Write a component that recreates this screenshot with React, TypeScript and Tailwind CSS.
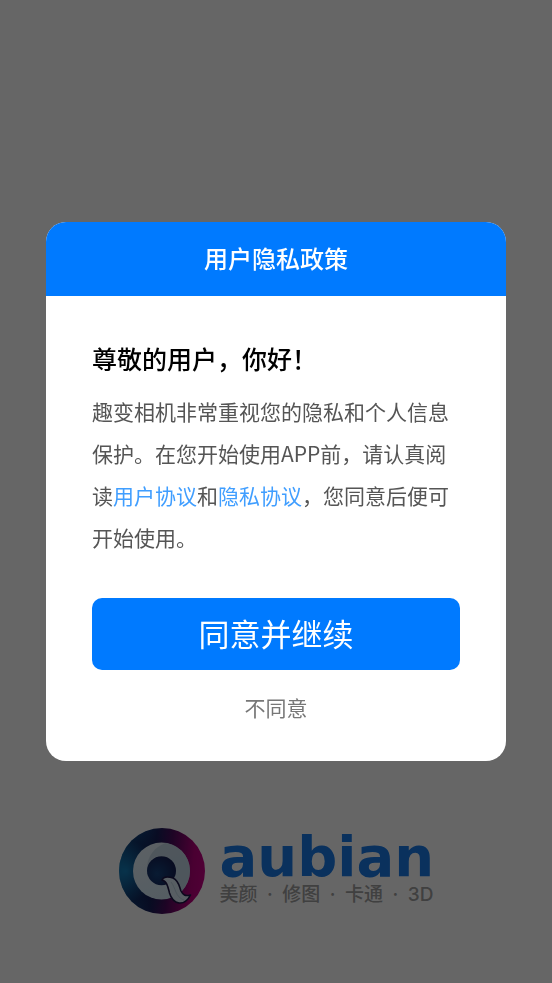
import React from "react";

function LogoMark() {
  return (
    <svg viewBox="0 0 86 86" className="size-[86px] shrink-0" aria-hidden="true">
      <defs>
        <linearGradient id="disc" x1="0" y1="0.45" x2="1" y2="0.55">
          <stop offset="0" stopColor="#1278b4" />
          <stop offset="0.2" stopColor="#114a85" />
          <stop offset="0.4" stopColor="#16205a" />
          <stop offset="0.58" stopColor="#4a0c5c" />
          <stop offset="0.85" stopColor="#b8007c" />
          <stop offset="1" stopColor="#c80086" />
        </linearGradient>
        <radialGradient id="glow" cx="0.08" cy="0.5" r="0.6">
          <stop offset="0" stopColor="#1490cc" stopOpacity="0.6" />
          <stop offset="0.6" stopColor="#101848" stopOpacity="0.5" />
          <stop offset="1" stopColor="#101848" stopOpacity="0" />
        </radialGradient>
        <linearGradient id="ring" x1="0.2" y1="0" x2="0.6" y2="1">
          <stop offset="0" stopColor="#e6f2fa" />
          <stop offset="1" stopColor="#d3e8f6" />
        </linearGradient>
        <radialGradient id="hole" cx="0.35" cy="0.6" r="0.7">
          <stop offset="0" stopColor="#17457f" />
          <stop offset="1" stopColor="#141c50" />
        </radialGradient>
      </defs>
      <circle cx="43" cy="43" r="43" fill="url(#disc)" />
      <circle cx="43" cy="43" r="43" fill="url(#glow)" />
      <circle cx="42.5" cy="43" r="28.5" fill="url(#ring)" />
      <path
        d="M47 15C60 17 70 28 71 41C71 50 68 57 63 63L55 50C58 40 54 30 43 28C36 28 30 31 28 40C28 29 36 18 47 15Z"
        fill="#b9cfde"
        opacity="0.7"
      />
      <circle cx="42.5" cy="42.7" r="14.5" fill="url(#hole)" />
      <path
        d="M43 52C44 49 48 48 54 50C60 53 60 58 62 63C64 67 66 68.500 71.500 67C69 72 65 75.500 60 75C54 74 52 70 50.500 65C49 59 48 53 43 52Z"
        fill="#dcecf7"
        stroke="#1c1748"
        strokeWidth="1.6"
        strokeLinejoin="round"
      />
      <path d="M52 54C57 60 56 69 65 72" fill="none" stroke="#b4cadb" strokeWidth="0.8" />
    </svg>
  );
}

function Brand() {
  return (
    <div className="flex items-center gap-[15px]">
      <LogoMark />
      <div className="w-[214px]">
        <p className="font-['DejaVu_Sans',sans-serif] text-[56px] leading-[48px] font-bold text-[#1a7ae8]">aubian</p>
        <p className="flex justify-between font-['Inter','Noto_Sans_CJK_SC',sans-serif] text-[19px] leading-7 font-medium text-[#a0a0a0]">
          <span>美颜</span>
          <span>·</span>
          <span>修图</span>
          <span>·</span>
          <span>卡通</span>
          <span>·</span>
          <span>3D</span>
        </p>
      </div>
    </div>
  );
}

function PrivacyDialog() {
  return (
    <section
      role="dialog"
      aria-modal="true"
      aria-labelledby="privacy-title"
      className="w-5/6 overflow-hidden rounded-[20px] bg-white"
    >
      <h1
        id="privacy-title"
        className="bg-[#007aff] pt-[18px] pb-5 text-center text-[24px] leading-9 font-medium text-white"
      >
        用户隐私政策
      </h1>
      <div className="flex flex-col px-[46px] pt-11 pb-9">
        <h2 className="text-[25px] leading-9 font-medium text-black">尊敬的用户，你好！</h2>
        <p className="mt-[14px] text-[21px] leading-[42px] text-[#555]">
          趣变相机非常重视您的隐私和个人信息保护。在您开始使用APP前，请认真阅读
          <a href="#agreement" className="text-[#409eff]">用户协议</a>和
          <a href="#privacy" className="text-[#409eff]">隐私协议</a>，您同意后便可开始使用。
        </p>
        <button type="button" className="mt-10 h-[72px] rounded-[10px] bg-[#007aff] pb-0.5 text-[31px] text-white">
          同意并继续
        </button>
        <button type="button" className="mt-[19px] self-center text-[21px] leading-9 text-[#777]">
          不同意
        </button>
      </div>
    </section>
  );
}

export default function App() {
  return (
    <div className="font-['Noto_Sans_CJK_SC',sans-serif]" lang="zh-CN">
      <main className="flex min-h-screen flex-col items-center justify-end bg-white pb-[69px]">
        <Brand />
      </main>
      <div className="fixed inset-0 flex items-center justify-center bg-black/60">
        <PrivacyDialog />
      </div>
    </div>
  );
}
